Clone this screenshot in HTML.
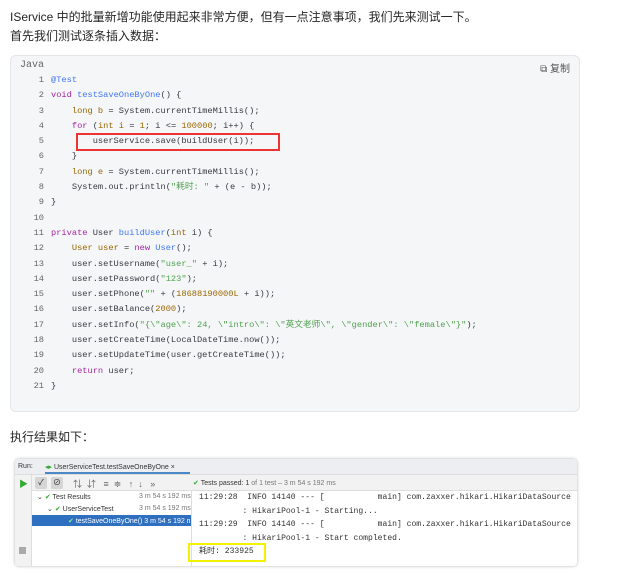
<!DOCTYPE html>
<html><head><meta charset="utf-8"><style>
body{margin:0;width:635px;height:577px;background:#fff;font-family:"Liberation Sans","Noto Sans CJK SC",sans-serif;color:#262626;position:relative;overflow:hidden}
.t{position:absolute;left:10px;font-size:12px;white-space:nowrap}
.code{position:absolute;left:10px;top:55px;width:570px;height:357px;background:#f5f6f8;border:1px solid #e5e6eb;border-radius:6px;box-sizing:border-box}
.lang{position:absolute;left:9px;top:4px;font-size:10px;color:#666;font-family:"Liberation Mono",monospace}
.copy{position:absolute;right:9px;top:4px;font-size:10px;color:#555}
pre{position:absolute;left:0;top:17px;margin:0;font-family:"Liberation Mono","Noto Sans CJK SC",monospace;font-size:8.7px;line-height:15.3px;color:#383a42}
.n{display:inline-block;width:33px;text-align:right;color:#666;margin-right:7px}
.k{color:#a626a4}.y{color:#986801}.f{color:#4078f2}.s{color:#50a14f}
.red{position:absolute;left:65px;top:77px;width:204px;height:18px;border:2px solid #ee3333;box-sizing:border-box}
.ide{position:absolute;left:15px;top:459px;width:562px;height:107px;border-radius:4px;box-shadow:0 0 3px rgba(0,0,0,.3);background:#fff;overflow:hidden;font-size:7px}
</style></head><body>
<div class="t" style="top:8px">IService 中的批量新增功能使用起来非常方便，但有一点注意事项，我们先来测试一下。</div>
<div class="t" style="top:27px">首先我们测试逐条插入数据：</div>
<div class="code">
<div class="lang">Java</div>
<div class="copy">⧉ 复制</div>
<pre><span class="n">1</span><span class="f">@Test</span>
<span class="n">2</span><span class="k">void</span> <span class="f">testSaveOneByOne</span>() {
<span class="n">3</span>    <span class="y">long b</span> = System.currentTimeMillis();
<span class="n">4</span>    <span class="k">for</span> (<span class="y">int i</span> = <span class="y">1</span>; i &lt;= <span class="y">100000</span>; i++) {
<span class="n">5</span>        userService.save(buildUser(i));
<span class="n">6</span>    }
<span class="n">7</span>    <span class="y">long e</span> = System.currentTimeMillis();
<span class="n">8</span>    System.out.println(<span class="s">"耗时: "</span> + (e - b));
<span class="n">9</span>}
<span class="n">10</span>
<span class="n">11</span><span class="k">private</span> User <span class="f">buildUser</span>(<span class="y">int</span> i) {
<span class="n">12</span>    <span class="y">User user</span> = <span class="k">new</span> <span class="f">User</span>();
<span class="n">13</span>    user.setUsername(<span class="s">"user_"</span> + i);
<span class="n">14</span>    user.setPassword(<span class="s">"123"</span>);
<span class="n">15</span>    user.setPhone(<span class="s">""</span> + (<span class="y">18688190000L</span> + i));
<span class="n">16</span>    user.setBalance(<span class="y">2000</span>);
<span class="n">17</span>    user.setInfo(<span class="s">"{\"age\": 24, \"intro\": \"英文老师\", \"gender\": \"female\"}"</span>);
<span class="n">18</span>    user.setCreateTime(LocalDateTime.now());
<span class="n">19</span>    user.setUpdateTime(user.getCreateTime());
<span class="n">20</span>    <span class="k">return</span> user;
<span class="n">21</span>}</pre>
<div class="red"></div>
</div>
<div class="t" style="top:428px">执行结果如下：</div>
<div class="ide">
<div style="position:absolute;left:0;top:0;width:562px;height:15px;background:#eceef1;border-bottom:1px solid #ddd"></div>
<div style="position:absolute;left:3px;top:4px;color:#333">Run:</div>
<div style="position:absolute;left:30px;top:4px;color:#333"><span style="color:#3a3">◂▸</span> UserServiceTest.testSaveOneByOne ×</div>
<div style="position:absolute;left:30px;top:13px;width:145px;height:2px;background:#4a88c7"></div>
<div style="position:absolute;left:0;top:16px;width:16px;height:91px;background:#f2f2f2;border-right:1px solid #ddd"></div>
<div style="position:absolute;left:4px;top:18px;color:#3a3;font-size:9px">▶</div>
<div style="position:absolute;left:4px;top:88px;width:7px;height:7px;background:#aaa"></div>
<div style="position:absolute;left:17px;top:16px;width:545px;height:15px;background:#f2f2f2;border-bottom:1px solid #ddd"></div>
<div style="position:absolute;left:20px;top:18px;width:12px;height:12px;background:#d5d5d5;border-radius:2px;text-align:center;font-size:8px">✓</div>
<div style="position:absolute;left:36px;top:18px;width:12px;height:12px;background:#d5d5d5;border-radius:2px;text-align:center;font-size:8px">⊘</div>
<div style="position:absolute;left:58px;top:18px;color:#666;font-size:9px">⇅ &nbsp;⇵ &nbsp;&nbsp;≡ &nbsp;≑ &nbsp;&nbsp;↑ &nbsp;↓ &nbsp;&nbsp;»</div>
<div style="position:absolute;left:178px;top:20px;color:#333"><span style="color:#3a3">✔</span> Tests passed: 1 <span style="color:#777">of 1 test – 3 m 54 s 192 ms</span></div>
<div style="position:absolute;left:17px;top:32px;width:159px;height:75px;border-right:1px solid #ddd"></div>
<div style="position:absolute;left:22px;top:34px;color:#333">⌄ <span style="color:#3a3">✔</span> Test Results</div>
<div style="position:absolute;left:124px;top:34px;color:#777">3 m 54 s 192 ms</div>
<div style="position:absolute;left:32px;top:46px;color:#333">⌄ <span style="color:#3a3">✔</span> UserServiceTest</div>
<div style="position:absolute;left:124px;top:46px;color:#777">3 m 54 s 192 ms</div>
<div style="position:absolute;left:17px;top:56px;width:159px;height:11px;background:#2f6fc0"></div>
<div style="position:absolute;left:53px;top:58px;color:#fff;width:122px;overflow:hidden;white-space:nowrap"><span style="color:#8e8">✔</span> testSaveOneByOne() 3 m 54 s 192 ms</div>
<div style="position:absolute;left:184px;top:32px;font-family:'Liberation Mono','Noto Sans CJK SC',monospace;font-size:8.05px;line-height:13.5px;color:#333;white-space:pre">11:29:28  INFO 14140 --- [           main] com.zaxxer.hikari.HikariDataSource
         : HikariPool-1 - Starting...
11:29:29  INFO 14140 --- [           main] com.zaxxer.hikari.HikariDataSource
         : HikariPool-1 - Start completed.
耗时: 233925</div>
<div style="position:absolute;left:173px;top:84px;width:78px;height:19px;border:2px solid #f2f200;box-sizing:border-box"></div>
</div>
</body></html>
